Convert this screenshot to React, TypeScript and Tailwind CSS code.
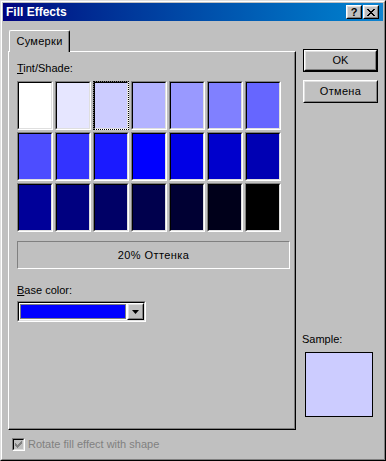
import React from "react";

function Raised({ className = "", innerClassName = "", children }: { className?: string; innerClassName?: string; children?: React.ReactNode }) {
  return (
    <div className={`border border-t-white border-l-white border-r-black border-b-black bg-[#c0c0c0] ${className}`}>
      <div className={`w-full h-full border border-t-[#dfdfdf] border-l-[#dfdfdf] border-r-[#808080] border-b-[#808080] ${innerClassName}`}>
        {children}
      </div>
    </div>
  );
}

function Sunken({ className = "", innerClassName = "", children }: { className?: string; innerClassName?: string; children?: React.ReactNode }) {
  return (
    <div className={`border border-t-[#808080] border-l-[#808080] border-r-white border-b-white ${className}`}>
      <div className={`w-full h-full border border-t-black border-l-black border-r-[#dfdfdf] border-b-[#dfdfdf] ${innerClassName}`}>
        {children}
      </div>
    </div>
  );
}

const rows = [
  ["#ffffff", "#e6e6ff", "#ccccff", "#b3b3ff", "#9999ff", "#8080ff", "#6666ff"],
  ["#4d4dff", "#3333ff", "#1a1aff", "#0000ff", "#0000e6", "#0000cc", "#0000b3"],
  ["#000099", "#000080", "#000066", "#00004d", "#000033", "#00001a", "#000000"],
];

export default function App() {
  return (
    <div className="w-[386px] h-[461px] bg-[#c0c0c0] border border-t-[#dfdfdf] border-l-[#dfdfdf] border-r-black border-b-black font-['Liberation_Sans',Arial,sans-serif] text-[11px] text-black select-none">
      <div className="w-full h-full border border-t-white border-l-white border-r-[#808080] border-b-[#808080] p-px flex flex-col">
        {/* Title bar */}
        <div className="h-[18px] bg-linear-to-r from-[#000080] to-[#1084d0] flex items-center justify-between pl-[3px] pr-[4px] shrink-0">
          <span className="text-white font-bold text-[12px] leading-[18px]">Fill Effects</span>
          <div className="flex gap-[1px]">
            <Raised className="w-[16px] h-[14px]" innerClassName="flex items-center justify-center">
              <span className="font-bold text-[11px] leading-[10px] font-['Liberation_Sans',sans-serif]">?</span>
            </Raised>
            <Raised className="w-[16px] h-[14px]" innerClassName="flex items-center justify-center">
              <svg width="8" height="7" viewBox="0 0 8 7">
                <path d="M0 0h2v1h-2zM6 0h2v1h-2zM1 1h2v1h-2zM5 1h2v1h-2zM2 2h4v1h-4zM3 3h2v1h-2zM2 4h4v1h-4zM1 5h2v1h-2zM5 5h2v1h-2zM0 6h2v1h-2zM6 6h2v1h-2z" fill="black" />
              </svg>
            </Raised>
          </div>
        </div>

        {/* Body */}
        <div className="flex">
          {/* Left column */}
          <div className="ml-[5px] mt-[9px] w-[288px] flex flex-col">
            <div className="h-[21px] flex">
              <div className="relative z-10 ml-[1px] w-[61px] h-[22px] bg-[#c0c0c0] border-t border-l border-r border-t-white border-l-white border-r-black rounded-t-[2px] shadow-[inset_-1px_0_0_#808080] flex items-center justify-center pb-[1px] tracking-[0.3px]">
                Сумерки
              </div>
            </div>
            <div className="h-[379px] border border-t-white border-l-white border-r-black border-b-black">
              <div className="w-full h-full border-r border-b border-r-[#808080] border-b-[#808080] pl-[8px] pt-[10px] flex flex-col">
                <div className="leading-[13px]">
                  <span className="underline">T</span>int/Shade:
                </div>
                <div className="mt-[6px] flex flex-col gap-[2px]">
                  {rows.map((r, ri) => (
                    <div key={ri} className="flex gap-[2px]">
                      {r.map((c, ci) => {
                        const sel = ri === 0 && ci === 2;
                        return (
                          <div key={ci} className={`w-[36px] h-[49px] ${sel ? "outline outline-1 outline-dotted outline-black -outline-offset-1" : ""}`}>
                            <Sunken className="w-full h-full">
                              <div className="w-full h-full" style={{ backgroundColor: c }} />
                            </Sunken>
                          </div>
                        );
                      })}
                    </div>
                  ))}
                </div>
                <div className="mt-[9px] w-[273px] h-[28px] border border-t-[#808080] border-l-[#808080] border-r-white border-b-white flex items-center justify-center tracking-[0.4px]">
                  20% Оттенка
                </div>
                <div className="mt-[15px] leading-[13px]">
                  <span className="underline">B</span>ase color:
                </div>
                <Sunken className="mt-[4px] w-[129px] h-[21px]" innerClassName="bg-white flex items-center">
                  <div className="ml-[1px] w-[106px] h-[15px] border border-[#808080] bg-[#0000ff]" />
                  <Raised className="ml-auto w-[17px] h-[17px]" innerClassName="flex items-center justify-center">
                    <svg width="7" height="4" viewBox="0 0 7 4">
                      <path d="M0 0h7L3.5 4z" fill="black" />
                    </svg>
                  </Raised>
                </Sunken>
              </div>
            </div>
          </div>

          {/* Right column */}
          <div className="ml-[7px] mt-[28px] w-[75px] h-[381px] flex flex-col">
            <div className="w-[75px] h-[23px] border border-black">
              <Raised className="w-full h-full" innerClassName="flex items-center justify-center">
                OK
              </Raised>
            </div>
            <Raised className="mt-[8px] w-[75px] h-[23px]" innerClassName="flex items-center justify-center tracking-[0.3px]">
              Отмена
            </Raised>
            <div className="mt-auto mb-[13px] flex flex-col">
              <div className="-ml-[1px] leading-[13px]">Sample:</div>
              <div className="mt-[6px] ml-[2px] w-[68px] h-[65px] border border-black bg-[#ccccff]" />
            </div>
          </div>
        </div>

        {/* Checkbox row */}
        <div className="mt-[8px] ml-[9px] flex items-center gap-[3px]">
          <div className="w-[13px] h-[13px] border border-t-[#808080] border-l-[#808080] border-r-white border-b-white">
            <div className="w-full h-full border border-t-black border-l-black border-r-[#dfdfdf] border-b-[#dfdfdf] bg-[#c0c0c0] flex items-center justify-center">
              <svg width="7" height="7" viewBox="0 0 7 7" shapeRendering="crispEdges">
                <path d="M6 0h1v1h-1zM5 1h2v1h-2zM0 2h1v1h-1zM4 2h3v1h-3zM0 3h2v1h-2zM3 3h3v1h-3zM0 4h5v1h-5zM1 5h3v1h-3zM2 6h1v1h-1z" fill="#808080" />
              </svg>
            </div>
          </div>
          <span className="text-[#808080] leading-[13px]">Rotate fill effect with shape</span>
        </div>
      </div>
    </div>
  );
}
